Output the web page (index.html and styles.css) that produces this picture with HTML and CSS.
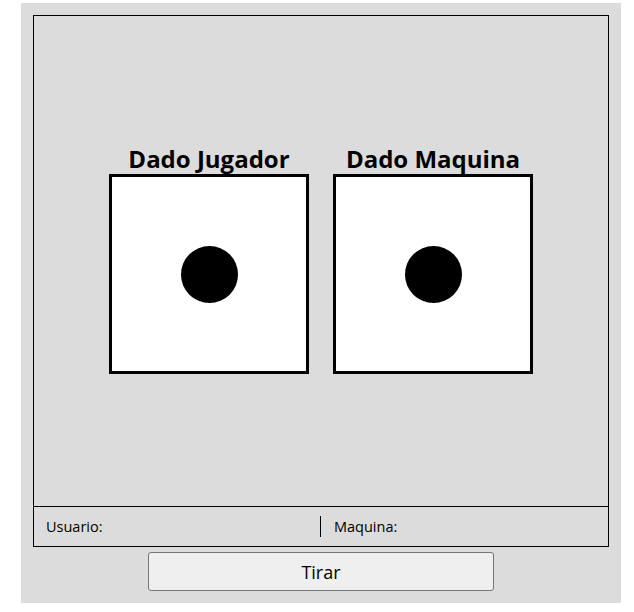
FILE: index.html
```html
<!DOCTYPE html>
<html lang="es">
<head>
<meta charset="utf-8">
<title>Dados</title>
<link rel="stylesheet" href="styles.css">
</head>
<body>
<div class="frame">
  <div class="board">
    <div class="stage">
      <div class="die-col">
        <div class="title">Dado Jugador</div>
        <div class="die"><span class="dot"></span></div>
      </div>
      <div class="die-col">
        <div class="title">Dado Maquina</div>
        <div class="die"><span class="dot"></span></div>
      </div>
    </div>
    <div class="footer">
      <div class="half half-left">Usuario:</div>
      <div class="sep"></div>
      <div class="half half-right">Maquina:</div>
    </div>
  </div>
  <button class="roll" type="button">Tirar</button>
</div>
</body>
</html>
```
FILE: styles.css
```css
html, body {
  margin: 0;
  padding: 0;
  background: #ffffff;
}

body {
  font-family: "Open Sans", "Noto Sans", sans-serif;
  color: #000;
}

.frame {
  box-sizing: border-box;
  width: 600px;
  height: 600px;
  margin: 3px 0 0 21px;
  padding: 12px;
  background: #dcdcdc;
  display: flex;
  flex-direction: column;
  align-items: center;
}

.board {
  box-sizing: border-box;
  width: 576px;
  height: 532px;
  border: 1px solid #000;
  display: flex;
  flex-direction: column;
}

.stage {
  flex: 1;
  display: flex;
  justify-content: center;
  align-items: center;
  gap: 24px;
}

.die-col {
  display: flex;
  flex-direction: column;
  align-items: center;
}

.title {
  font-weight: 700;
  font-size: 24px;
  line-height: 22px;
  margin-bottom: 4px;
}

.die {
  box-sizing: border-box;
  width: 200px;
  height: 200px;
  border: 3px solid #000;
  background: #fff;
  display: flex;
  align-items: center;
  justify-content: center;
}

.dot {
  width: 57px;
  height: 57px;
  border-radius: 50%;
  background: #000;
}

.footer {
  box-sizing: border-box;
  height: 40px;
  border-top: 1px solid #000;
  display: flex;
  align-items: center;
  font-size: 14.5px;
}

.half {
  flex: 1;
}

.half-left {
  padding-left: 12px;
}

.half-right {
  padding-left: 13px;
}

.sep {
  width: 1px;
  height: 21px;
  background: #000;
}

.roll {
  box-sizing: border-box;
  margin-top: 5px;
  width: 346px;
  height: 39px;
  border: 1px solid #767676;
  border-radius: 3px;
  background: #efefef;
  font-family: "Open Sans", "Noto Sans", sans-serif;
  font-size: 18px;
  color: #000;
  padding: 0;
}
```
